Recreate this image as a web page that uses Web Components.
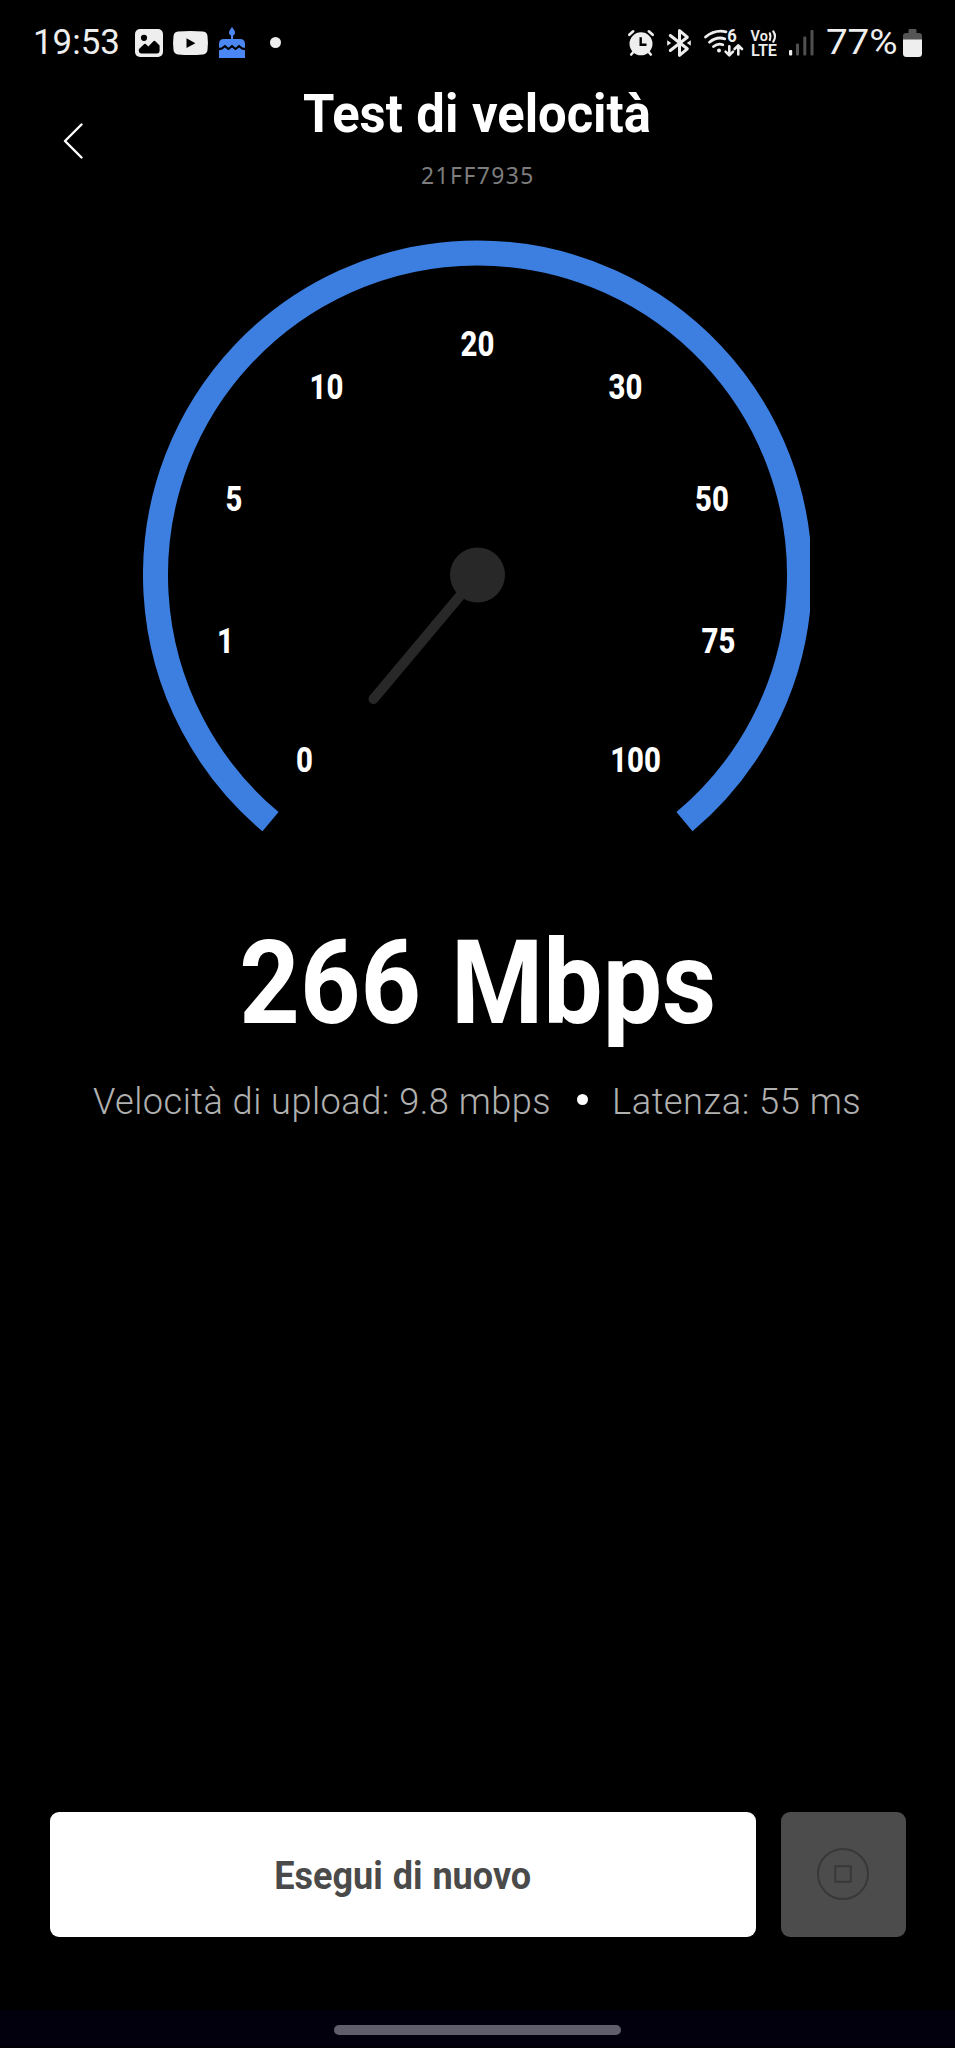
<!DOCTYPE html>
<html lang="it">
<head>
<meta charset="utf-8">
<title>Test di velocità</title>
<style>
    html, body {
        margin: 0;
        background: #000;
    }

    body {
        font-family: Roboto, "Liberation Sans", sans-serif;
        color: #fff;
    }
</style>
</head>
<body>

<speed-app>
    <status-bar slot="status" time="19:53" battery="77%"></status-bar>
    <app-header slot="header">
        <fit-text size="54" cap="38.4" width="346" weight="700" word-gap="1">Test di velocità</fit-text>
        <fit-text slot="sub" size="23.5" cap="16.6" width="111" weight="400" font="Noto Sans" letter-gap="1.5">21FF7935</fit-text>
    </app-header>
    <speed-gauge labels="0,1,5,10,20,30,50,75,100"></speed-gauge>
    <speed-result>
        <fit-text size="116" cap="82.5" width="470" weight="700" word-gap="4">266 Mbps</fit-text>
        <fit-text slot="stat" size="37.8" cap="26.7" width="456.6" weight="360" letter-gap=".5">Velocità di upload: 9.8 mbps</fit-text>
        <fit-text slot="stat2" size="37.8" cap="26.7" width="244.6" weight="360" letter-gap=".5">Latenza: 55 ms</fit-text>
    </speed-result>
    <action-bar slot="actions">
        <fit-text size="38.6" cap="27.5" width="254.5" weight="700" word-gap="1">Esegui di nuovo</fit-text>
    </action-bar>
</speed-app>

<script>

// Text stretched horizontally so that its ink is exactly `width` px wide.
// The box of the element is the cap height, with the baseline at the bottom.
class FitText extends HTMLElement {
    constructor() {
        super();

        const size = parseFloat(this.getAttribute('size')) || 16;
        const cap = parseFloat(this.getAttribute('cap')) || size * 0.711;
        const width = parseFloat(this.getAttribute('width')) || 100;
        const weight = this.getAttribute('weight') || 400;
        const font = this.getAttribute('font') || 'Roboto';
        const wordGap = parseFloat(this.getAttribute('word-gap')) || 0;
        const letterGap = parseFloat(this.getAttribute('letter-gap')) || 0;

        const text = this.textContent.trim();
        const ctx = document.createElement('canvas').getContext('2d');
        ctx.font = `${weight} ${size}px "${font}", sans-serif`;
        const m = ctx.measureText(text);
        const ink = m.actualBoundingBoxLeft + m.actualBoundingBoxRight
            + wordGap * (text.split(' ').length - 1)
            + letterGap * (text.length - 1);
        const scale = width / ink;
        const left = m.actualBoundingBoxLeft * scale;
        const baseline = cap / 2 + (m.fontBoundingBoxAscent - m.fontBoundingBoxDescent) / 2;

        this.attachShadow({ mode: 'open' });
        this.shadowRoot.innerHTML = `
            <style>
                :host {
                    display: block;
                    flex: none;
                    width: ${width}px;
                    height: ${cap}px;
                }

                span {
                    display: block;
                    width: max-content;
                    white-space: nowrap;
                    font: ${weight} ${size}px/${cap}px "${font}", sans-serif;
                    word-spacing: ${wordGap}px;
                    letter-spacing: ${letterGap}px;
                    transform-origin: 0 0;
                    transform: translate(${left}px, ${cap - baseline}px) scaleX(${scale});
                }
            </style>
            <span><slot></slot></span>
        `;
    }
}

customElements.define('fit-text', FitText);


class StatusBar extends HTMLElement {
    constructor() {
        super();

        this.attachShadow({ mode: 'open' });
        this.shadowRoot.innerHTML = `
            <style>
                :host {
                    display: flex;
                    justify-content: space-between;
                    align-items: center;
                    height: 85px;
                    padding: 0 33px 0 35px;
                    box-sizing: border-box;
                    color: #eee;
                }

                div {
                    display: flex;
                    align-items: center;
                }

                svg {
                    display: block;
                    flex: none;
                    fill: #eee;
                    overflow: visible;
                }

                .line {
                    fill: none;
                    stroke: #eee;
                }
            </style>
            <div>
                <fit-text size="34.5" cap="24.6" width="83.5">${this.getAttribute('time')}</fit-text>
                <svg style="margin-left: 16.5px" width="28" height="28" viewBox="0 0 28 28">
                    <rect width="28" height="28" rx="5"/>
                    <circle cx="9" cy="8.8" r="3.1" fill="#000"/>
                    <path fill="#000" d="M3.8 20.2 9 15.2q1-.9 2 0l2.3 2.2 4.9-5q1.2-1.2 2.4 0l4 4V22q0 2.4-2.4 2.4H6.2q-2.4 0-2.4-2.4z"/>
                </svg>
                <svg style="margin-left: 10px" width="35" height="24" viewBox="0 0 35 24">
                    <path d="M5 .6Q17.5-.4 30 .6q4 .4 4.5 4.4.9 7 0 14-.5 4-4.5 4.4-12.5 1-25 0Q1 23 .5 19q-.9-7 0-14Q1 1 5 .6z"/>
                    <path fill="#000" d="M13.5 7.3v9.8l8.9-4.9z"/>
                </svg>
                <svg style="margin-left: 11px" width="26" height="31" viewBox="0 0 26 31">
                    <g fill="#4b87f2">
                        <path d="M13 0q3 3.6 3 5.5a3 3 0 0 1-6 0Q10 3.6 13 0z"/>
                        <path d="M12 7h2.1v5.5H12z"/>
                        <path d="M5 12h16q5 0 5 5v3.800q-2.400.3-4.400-1.800l-1.600-1.200-3.400 3-3.600-3-3.600 3-3.400-3-1.600 1.200Q2.400 21.100 0 20.800V17q0-5 5-5z"/>
                        <path d="M0 23.200q3 .2 6-2.600l3.400 2.600 3.600-2.800 3.600 2.800 3.400-2.600q3 2.800 6 2.600V31H0z"/>
                    </g>
                </svg>
                <svg style="margin-left: 24.5px" width="11" height="11"><circle cx="5.5" cy="5.5" r="5.5"/></svg>
            </div>
            <div>
                <!-- alarm -->
                <svg width="26" height="26" viewBox="0 0 26 26">
                    <circle cx="13" cy="13.8" r="11.5"/>
                    <path class="line" stroke-width="2.6" stroke-linecap="round" d="M1.3 4.8 5.2 1.3M24.7 4.8l-3.9-3.5M5.8 21.5 3.2 24.5M20.2 21.5l2.6 3"/>
                    <path fill="none" stroke="#000" stroke-width="2.4" d="M12.7 7.2v7.6h5.8"/>
                </svg>
                <!-- bluetooth -->
                <svg style="margin-left: 13px" width="24" height="28" viewBox="0 0 24 28">
                    <path class="line" stroke-width="3" stroke-linejoin="round" stroke-linecap="round" d="M3.3 6.5 20.3 19.8 12.5 26.4V1.6l7.8 6.6L3.3 21.5"/>
                    <path d="M.2 11.2 4.2 14 .2 16.8zM23.8 11.2 19.8 14l4 2.8z"/>
                </svg>
                <!-- wifi 6 -->
                <svg style="margin-left: 13px" width="39" height="28" viewBox="0 0 39 28">
                    <g class="line" stroke-width="2.8" stroke-linecap="round">
                        <path d="M1.5 8Q11 .2 22 2.8M5.5 13.2Q12.5 7.2 20.8 9.8M9.5 17.5q4.5-3.7 9.3-1.8"/>
                        <path stroke-width="2.6" stroke-linejoin="round" d="M25.3 17.2v8.6M21.6 22.7l3.7 3.7 3.7-3.7M34.3 25.5v-8.6M30.6 20l3.7-3.7 3.7 3.7"/>
                    </g>
                    <circle cx="15" cy="21.4" r="2"/>
                    <text x="23.3" y="12.8" font-size="17.5" font-weight="700" textLength="9.5" lengthAdjust="spacingAndGlyphs">6</text>
                </svg>
                <!-- volte -->
                <svg style="margin-left: 8px" width="27" height="28" viewBox="0 0 27 28">
                    <text x="-.4" y="11.8" font-size="14.5" font-weight="600" textLength="17.2" lengthAdjust="spacingAndGlyphs">Vo</text>
                    <path class="line" stroke-width="2.2" stroke-linecap="round" d="M18.8 4.3q1.5 3.2 0 6.7M22.3 2.3q3.4 5 0 10.4"/>
                    <text x="0" y="27.3" font-size="16.5" font-weight="600" textLength="26" lengthAdjust="spacingAndGlyphs">LTE</text>
                </svg>
                <!-- signal -->
                <svg style="margin-left: 11.5px" width="25" height="26" viewBox="0 0 25 26">
                    <rect y="20" width="3.2" height="5.5" rx="1"/>
                    <g fill="#505050">
                        <rect x="7" y="13.5" width="3" height="12" rx="1"/>
                        <rect x="14.3" y="6.5" width="3" height="19" rx="1"/>
                        <rect x="21.5" y="0" width="3" height="25.5" rx="1"/>
                    </g>
                </svg>
                <fit-text style="margin-left: 12.5px" size="34.8" cap="24.6" width="69">${this.getAttribute('battery')}</fit-text>
                <!-- battery -->
                <svg style="margin-left: 7.5px" width="19" height="28" viewBox="0 0 19 28">
                    <path fill="#555" d="M5.5 1q0-1 1-1h6q1 0 1 1v3H16q3 0 3 3v4H0V7q0-3 3-3h2.5z"/>
                    <path d="M0 10.5h19V24.5q0 3.5-3.5 3.5h-12Q0 28 0 24.5z"/>
                </svg>
            </div>
        `;
    }
}

customElements.define('status-bar', StatusBar);


class AppHeader extends HTMLElement {
    constructor() {
        super();

        this.attachShadow({ mode: 'open' });
        this.shadowRoot.innerHTML = `
            <style>
                :host {
                    display: grid;
                    grid-template-columns: 60px 1fr 60px;
                    height: 155px;
                    padding: 0 36px 0 34px;
                    box-sizing: border-box;
                }

                .back {
                    padding: 38px 0 0 29px;
                }

                .back svg {
                    display: block;
                    fill: none;
                    stroke: #fff;
                    stroke-width: 2.4;
                    stroke-linecap: round;
                    stroke-linejoin: round;
                }

                .titles {
                    display: flex;
                    flex-direction: column;
                    align-items: center;
                    gap: 35.6px;
                    padding-top: 9px;
                }

                .sub {
                    padding-left: 2px;
                    color: #7d7d7d;
                }
            </style>
            <div class="back">
                <svg width="20" height="37" viewBox="0 0 20 37"><path d="M18.5 1.5 2 18 18.5 34.5"/></svg>
            </div>
            <div class="titles">
                <slot></slot>
                <div class="sub"><slot name="sub"></slot></div>
            </div>
        `;
    }
}

customElements.define('app-header', AppHeader);


class SpeedGauge extends HTMLElement {
    constructor() {
        super();

        // centre and baseline of each label on the dial
        const places = [
            [161.5, 532], [82.5, 413], [91, 271], [183.5, 159], [334.5, 116],
            [482.5, 159], [569, 271], [575.5, 413], [492.5, 532],
        ];
        const cx = 334.5;
        const cy = 335;
        const r = 322;
        const dx = r * Math.cos(50 * Math.PI / 180);
        const dy = r * Math.sin(50 * Math.PI / 180);

        const labels = this.getAttribute('labels').split(',').map((label, i) => {
            const [x, y] = places[i];
            return `<text transform="translate(${x} ${y}) scale(.85 1)">${label}</text>`;
        }).join('');

        this.attachShadow({ mode: 'open' });
        this.shadowRoot.innerHTML = `
            <style>
                :host {
                    display: block;
                    width: 667px;
                    height: 592px;
                    margin-left: 143px;
                }

                svg {
                    display: block;
                    overflow: hidden;
                }

                text {
                    font-size: 34.5px;
                    font-weight: 800;
                    text-anchor: middle;
                    fill: #fff;
                }
            </style>
            <svg width="667" height="592">
                <path fill="none" stroke="#3d7fe0" stroke-width="25"
                    d="M${cx - dx} ${cy + dy}A${r} ${r} 0 1 1 ${cx + dx} ${cy + dy}"/>
                <path stroke="#282828" stroke-width="10" stroke-linecap="round" d="M${cx} ${cy}l-104 124"/>
                <circle cx="${cx}" cy="${cy}" r="27.5" fill="#282828"/>
                ${labels}
            </svg>
        `;
    }
}

customElements.define('speed-gauge', SpeedGauge);


class SpeedResult extends HTMLElement {
    constructor() {
        super();

        this.attachShadow({ mode: 'open' });
        this.shadowRoot.innerHTML = `
            <style>
                :host {
                    display: flex;
                    flex-direction: column;
                    align-items: center;
                    gap: 65px;
                    padding-top: 108.6px;
                }

                .stats {
                    display: flex;
                    align-items: center;
                    padding-right: 2px;
                    color: #b0b0b0;
                }

                .dot {
                    width: 11px;
                    height: 11px;
                    margin: 0 27.5px 3px 26.5px;
                    border-radius: 50%;
                    background: #fff;
                }
            </style>
            <slot></slot>
            <div class="stats">
                <slot name="stat"></slot>
                <div class="dot"></div>
                <slot name="stat2"></slot>
            </div>
        `;
    }
}

customElements.define('speed-result', SpeedResult);


class ActionBar extends HTMLElement {
    constructor() {
        super();

        this.attachShadow({ mode: 'open' });
        this.shadowRoot.innerHTML = `
            <style>
                :host {
                    display: flex;
                    gap: 25px;
                    height: 124.5px;
                    padding: 0 49.5px 73.5px;
                }

                button {
                    display: flex;
                    align-items: center;
                    justify-content: center;
                    padding: 0;
                    border: 0;
                    border-radius: 9px;
                    color: #4a4a4a;
                }

                .run {
                    flex: 1;
                    padding-top: 2px;
                    background: #fff;
                }

                .stop {
                    width: 124.5px;
                    background: #4c4c4c;
                }
            </style>
            <button class="run"><slot></slot></button>
            <button class="stop">
                <svg width="52" height="52" fill="none" stroke="#383838" stroke-width="2">
                    <circle cx="26" cy="26" r="25"/>
                    <rect x="18.2" y="18.2" width="15.6" height="15.6"/>
                </svg>
            </button>
        `;
    }
}

customElements.define('action-bar', ActionBar);


class SpeedApp extends HTMLElement {
    constructor() {
        super();

        this.attachShadow({ mode: 'open' });
        this.shadowRoot.innerHTML = `
            <style>
                :host {
                    display: flex;
                    flex-direction: column;
                    width: 955px;
                    height: 2048px;
                    overflow: hidden;
                    background: #000;
                }

                main {
                    flex: 1;
                }

                nav {
                    display: flex;
                    justify-content: center;
                    height: 37px;
                    margin-bottom: 1px;
                    background: #03000e;
                }

                .handle {
                    width: 286.5px;
                    height: 10px;
                    margin-top: 15px;
                    border-radius: 5px;
                    background: #615e6b;
                }
            </style>
            <slot name="status"></slot>
            <slot name="header"></slot>
            <main><slot></slot></main>
            <slot name="actions"></slot>
            <nav><div class="handle"></div></nav>
        `;
    }
}

customElements.define('speed-app', SpeedApp);

</script>
</body>
</html>
